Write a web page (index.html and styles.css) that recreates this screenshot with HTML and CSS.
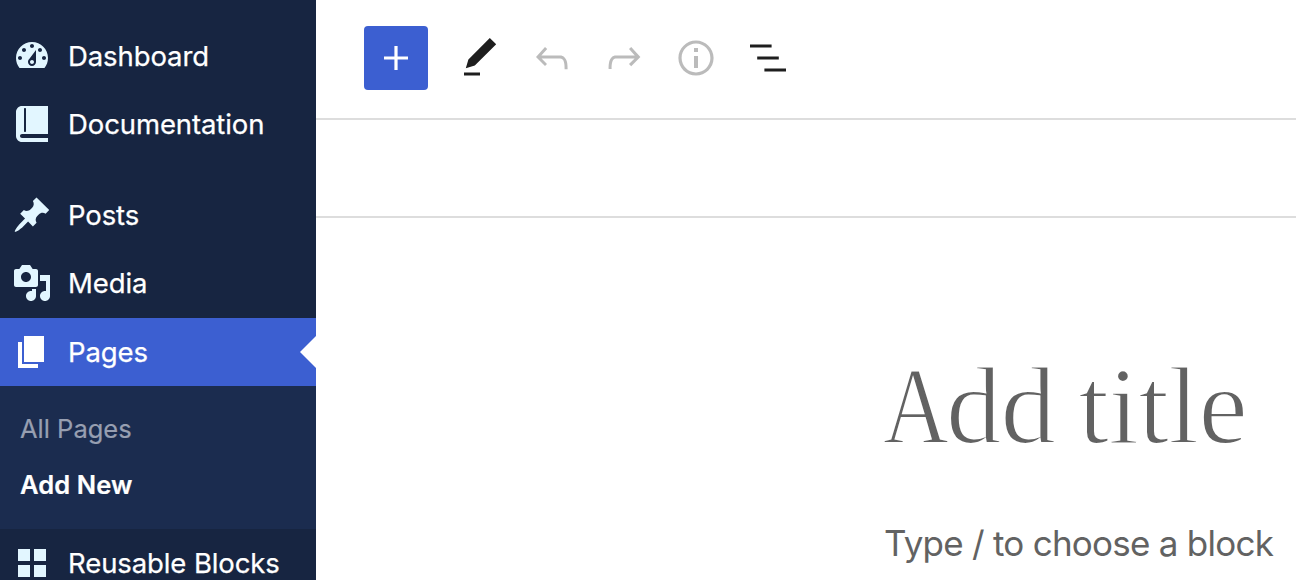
FILE: index.html
```html
<!DOCTYPE html>
<html lang="en">
<head>
<meta charset="utf-8">
<title>Add New Page</title>
<link rel="stylesheet" href="styles.css">
</head>
<body>
<div class="app">
  <nav class="sidebar">
    <a class="item"><svg class="icon" viewBox="0 0 20 20"><path d="M3.76 16h12.48c1.1-1.37 1.76-3.11 1.76-5 0-4.42-3.58-8-8-8s-8 3.58-8 8c0 1.89.66 3.63 1.76 5zM10 4c.55 0 1 .45 1 1s-.45 1-1 1-1-.45-1-1 .45-1 1-1zM6 6c.55 0 1 .45 1 1s-.45 1-1 1-1-.45-1-1 .45-1 1-1zm8 0c.55 0 1 .45 1 1s-.45 1-1 1-1-.45-1-1 .45-1 1-1zm-5.37 5.55L12 7v6c0 1.1-.9 2-2 2s-2-.9-2-2c0-.57.24-1.08.63-1.45zM4 10c.55 0 1 .45 1 1s-.45 1-1 1-1-.45-1-1 .45-1 1-1zm12 0c.55 0 1 .45 1 1s-.45 1-1 1-1-.45-1-1 .45-1 1-1zm-5 3c0-.55-.45-1-1-1s-1 .45-1 1 .45 1 1 1 1-.45 1-1z"/></svg><span class="label">Dashboard</span></a>
    <a class="item"><svg class="icon" viewBox="0 0 20 20"><path d="M5 17h13v2H5c-1.66 0-3-1.34-3-3V4c0-1.66 1.34-3 3-3h13v14H5c-.55 0-1 .45-1 1s.45 1 1 1zm2-3.5v-11c0-.28-.22-.5-.5-.5s-.5.22-.5.5v11c0 .28.22.5.5.5s.5-.22.5-.5z"/></svg><span class="label">Documentation</span></a>
    <div class="separator"></div>
    <a class="item"><svg class="icon" viewBox="0 0 20 20"><path d="M10.44 3.02l1.82-1.82 6.36 6.35-1.83 1.82c-1.05-.68-2.48-.57-3.41.36l-.75.75c-.92.93-1.04 2.35-.35 3.41l-1.83 1.82-2.41-2.41-2.8 2.79c-.42.42-3.38 2.71-3.8 2.29s1.86-3.39 2.28-3.81l2.79-2.79L4.1 9.36l1.83-1.82c1.05.69 2.48.57 3.4-.36l.75-.75c.93-.92 1.05-2.35.36-3.41z"/></svg><span class="label">Posts</span></a>
    <a class="item media"><svg class="icon" viewBox="0 0 20 20"><path d="M13 11V4c0-.55-.45-1-1-1h-1.67L9 1H5L3.67 3H2c-.55 0-1 .45-1 1v7c0 .55.45 1 1 1h10c.55 0 1-.45 1-1zM7 4.5c1.38 0 2.5 1.12 2.5 2.5S8.38 9.5 7 9.5 4.5 8.38 4.5 7 5.62 4.5 7 4.5zM14 6h5v10.5c0 1.38-1.12 2.5-2.5 2.5S14 17.88 14 16.5s1.12-2.5 2.5-2.5c.17 0 .34.02.5.05V9h-3V6zm-4 8.05V13h2v3.5c0 1.38-1.12 2.5-2.5 2.5S7 17.88 7 16.5 8.12 14 9.5 14c.17 0 .34.02.5.05z"/></svg><span class="label">Media</span></a>
    <a class="item current"><svg class="icon" viewBox="0 0 20 20"><path d="M6 15V2h10v13H6zm-1 1h8v2H3V5h2v11z"/></svg><span class="label">Pages</span><span class="arrow"></span></a>
    <div class="submenu">
      <a class="sub">All Pages</a>
      <a class="sub sub-current">Add New</a>
    </div>
    <a class="item"><svg class="icon" viewBox="0 0 20 20"><path d="M3 3h6v6H3zM11 3h6v6h-6zM3 11h6v6H3zM11 11h6v6h-6z"/></svg><span class="label">Reusable Blocks</span></a>
  </nav>
  <main class="editor">
    <header class="toolbar">
      <button class="tool add"><svg viewBox="0 0 24 24"><path d="M18 11.2h-5.2V6h-1.6v5.2H6v1.6h5.2V18h1.6v-5.2H18z"/></svg></button>
      <button class="tool"><svg viewBox="0 0 24 24"><path d="M20.1 5.1L16.9 2 6.2 12.7l-1.3 4.4 4.5-1.3L20.1 5.1zM4 20.8h8v-1.5H4v1.5z"/></svg></button>
      <button class="tool disabled"><svg viewBox="0 0 24 24"><path d="M18.3 11.7c-.6-.6-1.4-.9-2.3-.9H6.7l2.9-3.3-1.1-1-4.5 5L8.5 16l1-1-2.7-2.7H16c.5 0 .9.2 1.3.5 1 1 1 3.4 1 4.5v.3h1.5v-.2c0-1.5 0-4.3-1.5-5.7z"/></svg></button>
      <button class="tool disabled"><svg viewBox="0 0 24 24"><path d="M15.6 6.5l-1.1 1 2.9 3.3H8c-.9 0-1.7.3-2.3.9-1.4 1.5-1.4 4.2-1.4 5.6v.2h1.5v-.3c0-1.1 0-3.5 1-4.5.3-.3.7-.5 1.3-.5h9.2L14.5 15l1.1 1.1 4.6-4.6-4.6-5z"/></svg></button>
      <button class="tool disabled"><svg viewBox="0 0 24 24"><path d="M12 3.2c-4.8 0-8.8 3.9-8.8 8.8 0 4.8 3.9 8.8 8.8 8.8 4.8 0 8.8-3.9 8.8-8.8 0-4.8-4-8.8-8.8-8.8zm0 16c-4 0-7.2-3.3-7.2-7.2C4.8 8 8 4.8 12 4.8s7.2 3.3 7.2 7.2c0 4-3.2 7.2-7.2 7.2zM11 17h2v-6h-2v6zm0-8h2V7h-2v2z"/></svg></button>
      <button class="tool"><svg viewBox="0 0 24 24"><path d="M13.8 5.2H3v1.5h10.8V5.2zm-3.6 12v1.5H21v-1.5H10.2zm7.2-6H6.6v1.5h10.8v-1.5z"/></svg></button>
    </header>
    <div class="notices"></div>
    <section class="canvas">
      <h1 class="title"><span class="initial">A</span>dd title</h1>
      <p class="prompt">Type / to choose a block</p>
    </section>
  </main>
</div>
</body>
</html>
```

FILE: styles.css
```css
* { box-sizing: border-box; }
body { margin: 0; background: #fff; font-family: Inter, sans-serif; }
.app { display: flex; height: 580px; overflow: hidden; }

.sidebar { flex: none; width: 316px; padding-top: 22px; background: #172541; overflow: hidden; }
.item { display: flex; align-items: center; height: 68px; padding-left: 12px; color: #fff; font-size: 27.5px; }
.icon { flex: none; width: 40px; height: 40px; margin-right: 16px; fill: #e2f6ff; }
.label { flex: 1; line-height: 36px; white-space: nowrap; letter-spacing: -0.1px; -webkit-text-stroke: 0.25px; }
.separator { height: 23px; }
.media { margin-bottom: 1px; }
.current { background: #3c5fd1; }
.current .icon { fill: #fff; }
.arrow { border: 16px solid transparent; border-left-width: 0; border-right-color: #fff; }
.submenu { display: flex; flex-direction: column; height: 143px; padding: 15px 20px; background: #1b2c4f; }
.sub { height: 56px; line-height: 56px; font-size: 25.5px; color: #979fb1; -webkit-text-stroke: 0.2px; }
.sub-current { color: #fff; font-weight: 600; letter-spacing: 0.1px; }

.editor { flex: 1; min-width: 0; }
.toolbar { display: flex; align-items: center; gap: 24px; height: 120px; padding: 0 48px 2px; border-bottom: 2px solid #ddd; }
.tool { display: flex; align-items: center; justify-content: center; width: 48px; height: 48px; padding: 0; border: 0; background: none; fill: #1e1e1e; }
.tool svg { width: 48px; height: 48px; }
.add { width: 64px; height: 64px; margin-right: 4px; border-radius: 4px; background: #3c5fd1; fill: #fff; }
.disabled { fill: #bbb; }
.notices { height: 98px; border-bottom: 2px solid #ddd; }
.canvas { padding: 122px 0 0 568px; color: #626262; white-space: nowrap; }
.title { margin: 0 0 0 -1px; font: 400 111px/132px "Liberation Serif", serif; letter-spacing: -0.8px; word-spacing: -4px; -webkit-text-stroke: 2px #fff; }
.initial { display: inline-block; margin-right: -16.5px; transform: scaleX(0.82); transform-origin: left; }
.prompt { margin: 49px 0 0; font-size: 35px; line-height: 44px; letter-spacing: -0.75px; }
```
